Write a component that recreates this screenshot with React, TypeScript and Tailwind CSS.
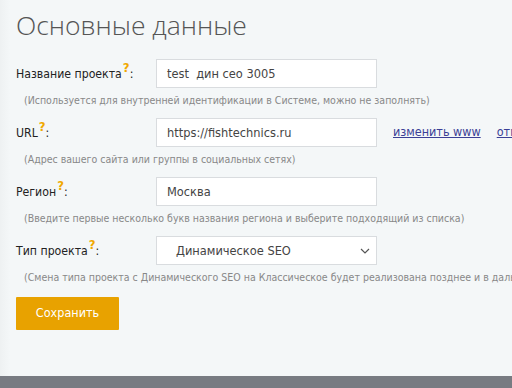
import React from "react";

const font = { fontFamily: "Tahoma, 'DejaVu Sans Condensed', 'DejaVu Sans', sans-serif" };

function Hint() {
  return <span className="text-[#f0a800] font-bold text-[13px] relative -top-[6px] ml-[1px]">?</span>;
}

function Row({ label, hint, children }: { label: string; hint: string; children: React.ReactNode }) {
  return (
    <div className="flex flex-col">
      <div className="flex items-center h-[29px]">
        <div className="w-[140px] shrink-0 text-[12.2px] text-[#222]">
          {label}
          <Hint />:
        </div>
        {children}
      </div>
      <div className="pl-[8px] mt-[5px] h-[14px] leading-[14px] text-[10.5px] text-[#888] whitespace-nowrap">{hint}</div>
    </div>
  );
}

export default function App() {
  return (
    <div className="relative w-[512px] h-[388px] overflow-hidden bg-[#f4f7f8]" style={font}>
      <div className="absolute left-0 top-0 bottom-0 w-[10px] bg-gradient-to-r from-[#eef1f2] to-transparent" />
      <div className="relative flex flex-col pl-[16px] pt-[9px]">
        <h1 className="h-[32px] text-[26.5px] font-light text-[#555] leading-[32px]" style={{ fontFamily: "'Open Sans', sans-serif" }}>
          Основные данные
        </h1>
        <div className="flex flex-col gap-[11px] mt-[18px]">
          <Row label="Название проекта" hint="(Используется для внутренней идентификации в Системе, можно не заполнять)">
            <div className="w-[221px] h-[29px] bg-white border border-[#d9dcdf] flex items-center px-[10px] text-[12.7px] text-[#444] whitespace-pre">
              test  дин сео 3005
            </div>
          </Row>
          <Row label="URL" hint="(Адрес вашего сайта или группы в социальных сетях)">
            <div className="w-[221px] h-[29px] bg-white border border-[#d9dcdf] flex items-center px-[10px] text-[12.7px] text-[#444] shrink-0">
              https://fishtechnics.ru
            </div>
            <a className="ml-[16px] text-[12.5px] text-[#3b3f96] underline whitespace-nowrap">изменить www</a>
            <a className="ml-[16px] text-[12.5px] text-[#3b3f96] underline whitespace-nowrap">отменить</a>
          </Row>
          <Row label="Регион" hint="(Введите первые несколько букв названия региона и выберите подходящий из списка)">
            <div className="w-[221px] h-[29px] bg-white border border-[#d9dcdf] flex items-center px-[10px] text-[12.7px] text-[#444]">
              Москва
            </div>
          </Row>
          <Row label="Тип проекта" hint="(Смена типа проекта с Динамического SEO на Классическое будет реализована позднее и в дальнейшем)">
            <div className="w-[221px] h-[29px] bg-white border border-[#d9dcdf] flex items-center justify-between pl-[19px] pr-[6px] text-[12.7px] text-[#444]">
              <span>Динамическое SEO</span>
              <svg width="10" height="6" viewBox="0 0 10 6" fill="none" stroke="#555" strokeWidth="1.2">
                <path d="M1 1l4 4 4-4" />
              </svg>
            </div>
          </Row>
        </div>
        <button className="mt-[13px] w-[103px] h-[33px] bg-[#e8a200] text-white text-[12.5px] rounded-[1px]">
          Сохранить
        </button>
      </div>
      <div className="absolute left-0 right-0 bottom-0 h-[12px] bg-[#787b82]" />
    </div>
  );
}
